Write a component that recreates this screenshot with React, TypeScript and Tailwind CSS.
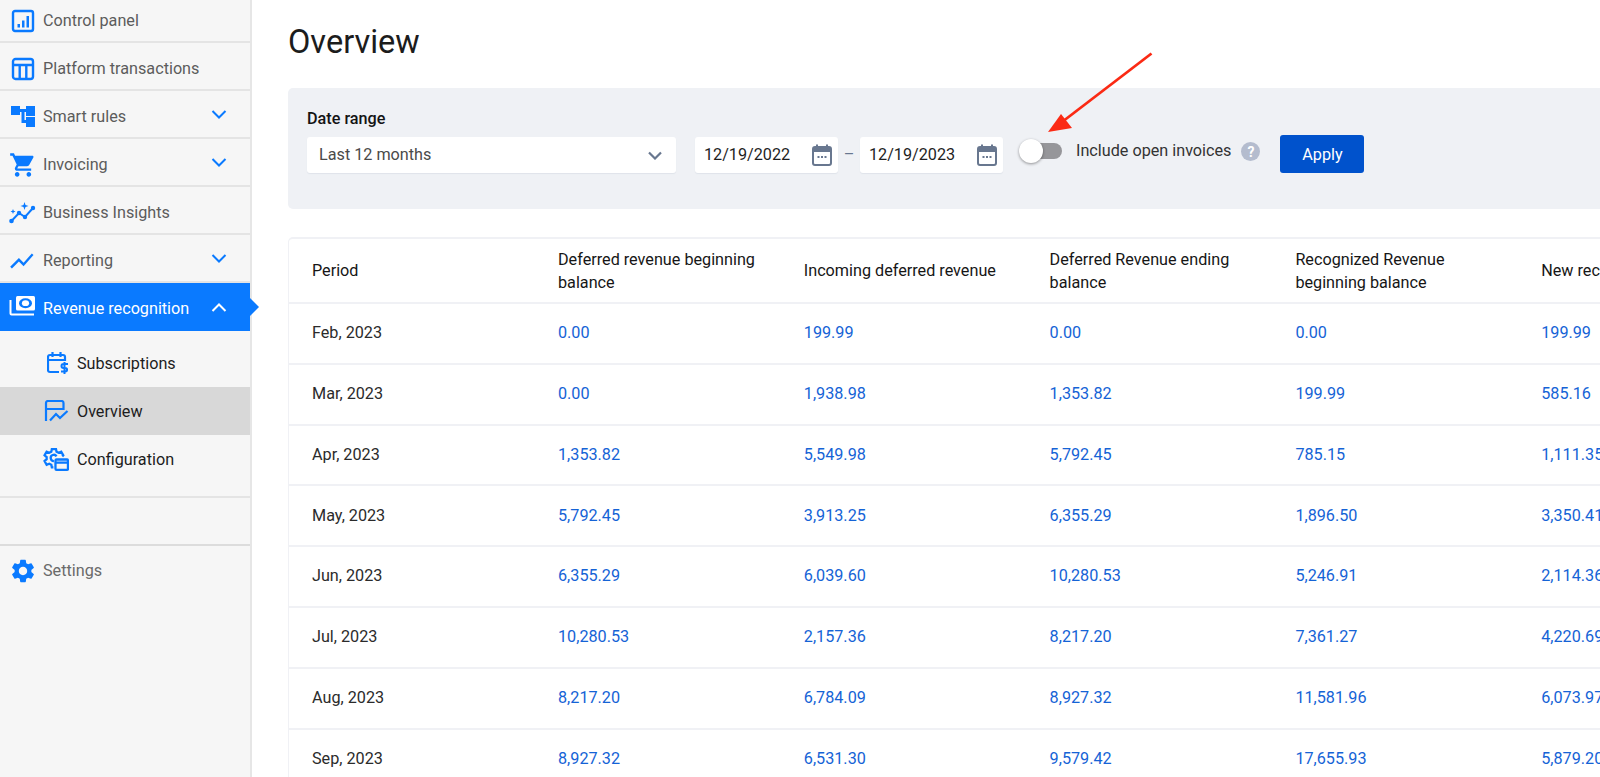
import React from "react";

const BLUE = "#0a7aff";

function Chevron({ up, color = BLUE }: { up?: boolean; color?: string }) {
  return (
    <svg width="16" height="9" viewBox="0 0 16 9" fill="none" stroke={color} strokeWidth="2">
      <path d={up ? "M1.5 8 8 1.5 14.5 8" : "M1.5 1 8 7.5 14.5 1"} />
    </svg>
  );
}

const icons: Record<string, React.ReactNode> = {
  control: (
    <svg width="24" height="24" viewBox="0 0 24 24" fill="none">
      <rect x="2" y="2" width="20" height="20" rx="2" stroke={BLUE} strokeWidth="2.4" />
      <path d="M6.500 15h2.500v3.500H6.500zM11 11.500h2.500v7H11zM15.500 7H18v11.500h-2.500z" fill={BLUE} />
    </svg>
  ),
  table: (
    <svg width="24" height="24" viewBox="0 0 24 24" fill="none" stroke={BLUE} strokeWidth="2.4">
      <rect x="2" y="2" width="20" height="20" rx="2.5" />
      <path d="M2 8h20M8.700 8v14M15.300 8v14" />
    </svg>
  ),
  rules: (
    <svg width="24" height="21" viewBox="0 0 24 21" fill={BLUE}>
      <rect x="0" y="0" width="9" height="9" />
      <rect x="15" y="0" width="9" height="10" />
      <rect x="15" y="11" width="9" height="10" />
      <path d="M9 3h6v3H13.500v8H15v3h-4.500V6H9z" />
    </svg>
  ),
  cart: (
    <svg width="28" height="28" viewBox="0 0 24 24" fill={BLUE}>
      <path d="M7 18c-1.1 0-1.99.9-1.99 2S5.9 22 7 22s2-.9 2-2-.9-2-2-2zM1 2v2h2l3.6 7.59-1.35 2.45c-.16.28-.25.61-.25.96 0 1.1.9 2 2 2h12v-2H7.42c-.14 0-.25-.11-.25-.25l.03-.12.9-1.63h7.45c.75 0 1.41-.41 1.75-1.03l3.58-6.49c.08-.14.12-.31.12-.48 0-.55-.45-1-1-1H5.21l-.94-2H1zm16 16c-1.1 0-1.99.9-1.99 2s.89 2 1.99 2 2-.9 2-2-.9-2-2-2z" />
    </svg>
  ),
  insights: (
    <svg width="27" height="22" viewBox="0 0 27 22" fill={BLUE}>
      <path d="M2.500 19 10 11l6 4 8-9" fill="none" stroke={BLUE} strokeWidth="2" />
      <circle cx="2.500" cy="19" r="2.300" />
      <circle cx="10" cy="11" r="2.200" />
      <circle cx="16" cy="15" r="2.200" />
      <circle cx="24" cy="6" r="2.200" />
      <path d="M15.500 0l1 3 3 1-3 1-1 3-1-3-3-1 3-1zM4 7l.7 1.800 1.800.7-1.800.7L4 12l-.7-1.800-1.800-.7 1.800-.7z" />
    </svg>
  ),
  chart: (
    <svg width="28" height="28" viewBox="0 0 24 24" fill={BLUE}>
      <path d="M2.500 18.490l6-6.010 4 4L21 6.920l-1.410-1.410-7.090 7.970-4-4L1 16.990z" />
    </svg>
  ),
  money: (
    <svg width="27" height="20" viewBox="0 0 27 20" fill="none">
      <path d="M1.500 4v13.500a1 1 0 0 0 1 1H25" stroke="#fff" strokeWidth="2" />
      <rect x="7" y="0" width="19" height="14.500" rx="1.500" fill="#fff" />
      <ellipse cx="16.500" cy="7.200" rx="6.500" ry="5" fill={BLUE} />
      <ellipse cx="16.500" cy="7.200" rx="3.600" ry="2.900" fill="#fff" />
    </svg>
  ),
  subs: (
    <svg width="22" height="24" viewBox="0 0 22 24" fill="none" stroke={BLUE} strokeWidth="2.200">
      <path d="M12 21H3a2 2 0 0 1-2-2V6a2 2 0 0 1 2-2h13a2 2 0 0 1 2 2v4M1 9h17M5.500 1v5M13.500 1v5" />
      <path d="M21 13h-4.500a1.500 1.500 0 0 0 0 4h1.800a1.500 1.500 0 0 1 0 3.500H14M17.500 11v12" strokeWidth="2" />
    </svg>
  ),
  overview: (
    <svg width="25" height="22" viewBox="0 0 25 22" fill="none" stroke={BLUE} strokeWidth="2.200">
      <path d="M2 21V3a2 2 0 0 1 2-2h13.500a2 2 0 0 1 2 2v6H2" />
      <path d="M6 20.500 12 14l4 4 7.500-7" />
    </svg>
  ),
  config: (
    <svg width="26" height="25" viewBox="0 0 25 24" fill="none" stroke={BLUE} strokeWidth="2.200">
      <path d="M10 19.500H8.500l-.5-2.500-2-1-2.500 1L1.500 13.500l2-1.800v-2l-2-1.800L3.500 4.500 6 5.500l2-1L8.500 2h4l.5 2.500 2 1 2.500-1L19.500 8l-1 1" />
      <path d="M10.500 13.500A3 3 0 1 1 13 9" />
      <rect x="12" y="12" width="12" height="10" rx="1" />
      <path d="M12 15h12" />
    </svg>
  ),
  gear: (
    <svg width="28" height="28" viewBox="0 0 24 24" fill={BLUE}>
      <path d="M19.140 12.940c.04-.3.06-.61.06-.94 0-.32-.02-.64-.07-.94l2.030-1.580c.18-.14.23-.41.12-.61l-1.920-3.320c-.12-.22-.37-.29-.59-.22l-2.390.96c-.5-.38-1.030-.7-1.620-.94l-.36-2.540c-.04-.24-.24-.41-.48-.41h-3.840c-.24 0-.43.17-.47.41l-.36 2.540c-.59.24-1.130.57-1.620.94l-2.390-.96c-.22-.08-.47 0-.59.22L2.740 8.870c-.12.21-.08.47.12.61l2.030 1.580c-.05.3-.09.63-.09.94s.02.64.07.94l-2.030 1.580c-.18.14-.23.41-.12.61l1.920 3.320c.12.22.37.29.59.22l2.390-.96c.5.38 1.030.7 1.620.94l.36 2.540c.05.24.24.41.48.41h3.840c.24 0 .44-.17.47-.41l.36-2.540c.59-.24 1.130-.56 1.620-.94l2.390.96c.22.08.47 0 .59-.22l1.920-3.320c.12-.22.07-.47-.12-.61l-2.010-1.580zM12 15.600c-1.980 0-3.600-1.620-3.600-3.600s1.620-3.600 3.600-3.600 3.600 1.620 3.600 3.600-1.620 3.600-3.600 3.600z" />
    </svg>
  ),
};

function NavItem({ icon, label, chevron, first }: { icon: string; label: string; chevron?: boolean; first?: boolean }) {
  return (
    <div className={`flex items-center border-b-2 border-[#e4e4e4] text-[#5c5c5c] ${first ? "h-[43px]" : "h-[48px]"}`}>
      <span className={`flex w-[44px] shrink-0 justify-center pl-[1px] ${first ? "" : "pt-[5px]"}`}>{icons[icon]}</span>
      <span className={`-ml-[1px] flex-1 ${first ? "pt-[1px]" : "pt-[7px]"}`}>{label}</span>
      {chevron && (
        <span className="mr-[23px] mt-[1px] flex">
          <Chevron />
        </span>
      )}
    </div>
  );
}

function SubItem({ icon, label, active }: { icon: string; label: string; active?: boolean }) {
  return (
    <div className={`flex h-[48px] items-center text-[#1d1d1d] ${active ? "bg-[#d8d8d8]" : ""}`}>
      <span className="flex w-[77px] shrink-0 justify-end pr-[8px]">{icons[icon]}</span>
      <span className="pt-[3px]">{label}</span>
    </div>
  );
}

function CalendarIcon() {
  return (
    <svg width="20" height="22" viewBox="0 0 20 22" fill="none">
      <rect x="1" y="3" width="18" height="18" rx="2" fill="#fff" stroke="#68778f" strokeWidth="2" />
      <path d="M1 5a2 2 0 0 1 2-2h14a2 2 0 0 1 2 2v3H1z" fill="#68778f" />
      <path d="M5 0.500v3M15 0.500v3" stroke="#68778f" strokeWidth="2" />
      <path d="M5.500 12h2v2h-2zM9 12h2v2H9zM12.500 12h2v2h-2z" fill="#68778f" />
    </svg>
  );
}

function DateField({ value }: { value: string }) {
  return (
    <div className="flex h-[36px] w-[143px] items-center justify-between rounded-[3px] bg-white pl-[9px] pr-[6px] text-[#1f1f1f] shadow-[0_1px_1px_#dfe3ea]">
      <span className="text-[16.200px]">{value}</span>
      <CalendarIcon />
    </div>
  );
}

const rows: string[][] = [
  ["Feb, 2023", "0.00", "199.99", "0.00", "0.00", "199.99"],
  ["Mar, 2023", "0.00", "1,938.98", "1,353.82", "199.99", "585.16"],
  ["Apr, 2023", "1,353.82", "5,549.98", "5,792.45", "785.15", "1,111.35"],
  ["May, 2023", "5,792.45", "3,913.25", "6,355.29", "1,896.50", "3,350.41"],
  ["Jun, 2023", "6,355.29", "6,039.60", "10,280.53", "5,246.91", "2,114.36"],
  ["Jul, 2023", "10,280.53", "2,157.36", "8,217.20", "7,361.27", "4,220.69"],
  ["Aug, 2023", "8,217.20", "6,784.09", "8,927.32", "11,581.96", "6,073.97"],
  ["Sep, 2023", "8,927.32", "6,531.30", "9,579.42", "17,655.93", "5,879.20"],
];

const headers = [
  "Period",
  "Deferred revenue beginning balance",
  "Incoming deferred revenue",
  "Deferred Revenue ending balance",
  "Recognized Revenue beginning balance",
];

export default function App() {
  return (
    <div className="relative flex h-[777px] w-[1600px] overflow-hidden bg-white font-['Roboto',sans-serif] text-[16.200px]">
      <aside className="relative z-10 h-full w-[252px] shrink-0 border-r-2 border-[#e6e6e6] bg-[#f6f6f6]">
        <NavItem first icon="control" label="Control panel" />
        <NavItem icon="table" label="Platform transactions" />
        <NavItem icon="rules" label="Smart rules" chevron />
        <NavItem icon="cart" label="Invoicing" chevron />
        <NavItem icon="insights" label="Business Insights" />
        <NavItem icon="chart" label="Reporting" chevron />
        <div className="relative flex h-[48px] items-center bg-[#0a7aff] text-white">
          <span className="-mt-[2px] flex w-[44px] shrink-0 justify-center">{icons.money}</span>
          <span className="-ml-[1px] flex-1 pt-[5px]">Revenue recognition</span>
          <span className="mr-[23px] mt-[1px] flex">
            <Chevron up color="#fff" />
          </span>
          <span className="absolute -right-[9px] top-[15px] h-0 w-0 border-y-[9px] border-l-[9px] border-y-transparent border-l-[#0a7aff]" />
        </div>
        <div className="border-b-2 border-[#e4e4e4] pb-[13px] pt-[8px]">
          <SubItem icon="subs" label="Subscriptions" />
          <SubItem active icon="overview" label="Overview" />
          <SubItem icon="config" label="Configuration" />
        </div>
        <div className="h-[48px] border-b-2 border-[#dcdcdc]" />
        <div className="flex h-[50px] items-center text-[#6a6a6a]">
          <span className="flex w-[44px] shrink-0 justify-center pl-[1px]">{icons.gear}</span>
          <span className="-ml-[1px]">Settings</span>
        </div>
      </aside>

      <main className="min-w-0 flex-1 overflow-hidden pl-[36px]">
        <div className="flex h-[88px] items-start pt-[20px]">
          <h1 className="text-[32.500px] leading-[44px] text-[#1c1c1c]">Overview</h1>
        </div>

        <section className="relative h-[121px] w-[1400px] rounded-[5px] bg-[#eff1f5] pl-[19px] pt-[21px]">
          <div className="font-medium leading-[20px] text-[#141414]">Date range</div>
          <div className="mt-[8px] flex items-start">
            <div className="flex h-[36px] w-[369px] items-center justify-between rounded-[3px] bg-white pl-[12px] pr-[14px] text-[#4a4a4a] shadow-[0_1px_1px_#dfe3ea]">
              <span>Last 12 months</span>
              <svg width="14" height="9" viewBox="0 0 14 9" fill="none" stroke="#68778f" strokeWidth="2.200">
                <path d="M1 1.500 7 7.500 13 1.500" />
              </svg>
            </div>
            <div className="ml-[19px]">
              <DateField value="12/19/2022" />
            </div>
            <span className="flex h-[36px] w-[22px] items-center justify-center text-[#68778f]">–</span>
            <DateField value="12/19/2023" />
            <div className="relative ml-[16px] mt-[6px] h-[16px] w-[43px]">
              <div className="absolute bottom-0 left-[11px] top-0 w-[32px] rounded-full bg-[#96969a]" />
              <div className="absolute -top-[4px] left-0 h-[24px] w-[24px] rounded-full bg-white shadow-[0_1px_3px_rgba(0,0,0,0.4)]" />
            </div>
            <span className="ml-[14px] h-[28px] leading-[28px] text-[#333]">Include open invoices</span>
            <span className="ml-[10px] mt-[5px] flex h-[19px] w-[19px] items-center justify-center rounded-full bg-[#b4bcce] text-[14px] font-bold leading-none text-white">
              ?
            </span>
            <button className="ml-[20px] -mt-[2px] h-[38px] w-[84px] rounded-[3px] bg-[#0052cc] pt-[2px] text-white">
              Apply
            </button>
          </div>
        </section>

        <section className="mt-[28px] w-[1400px] rounded-[5px] border-l border-t-2 border-[#f0f1f5]">
          <div className="grid h-[65px] grid-cols-[269px_245.800px_245.800px_245.800px_245.800px_245.800px] items-center border-b-2 border-[#f0f1f5] leading-[23px] text-[#161616]">
            {headers.map((h, i) => (
              <div key={h} className={i === 0 ? "pl-[23px]" : "pr-[40px]"}>
                {h}
              </div>
            ))}
            <div className="whitespace-nowrap">New recognized revenue</div>
          </div>
          {rows.map((r) => (
            <div
              key={r[0]}
              className="grid h-[60.800px] grid-cols-[269px_245.800px_245.800px_245.800px_245.800px_245.800px] items-center border-b-2 border-[#f0f1f5]"
            >
              {r.map((c, i) => (
                <div key={i} className={i === 0 ? "pl-[23px] text-[#2b2b2b]" : "text-[#1563d6]"}>
                  {c}
                </div>
              ))}
            </div>
          ))}
        </section>
      </main>

      <svg className="pointer-events-none absolute left-[1040px] top-[48px]" width="120" height="90" viewBox="0 0 120 90" fill="#fb2a14">
        <path d="M111.500 5.500 22 74" stroke="#fb2a14" strokeWidth="2.800" fill="none" />
        <path d="M8 84 21 66l11 14z" />
      </svg>
    </div>
  );
}
